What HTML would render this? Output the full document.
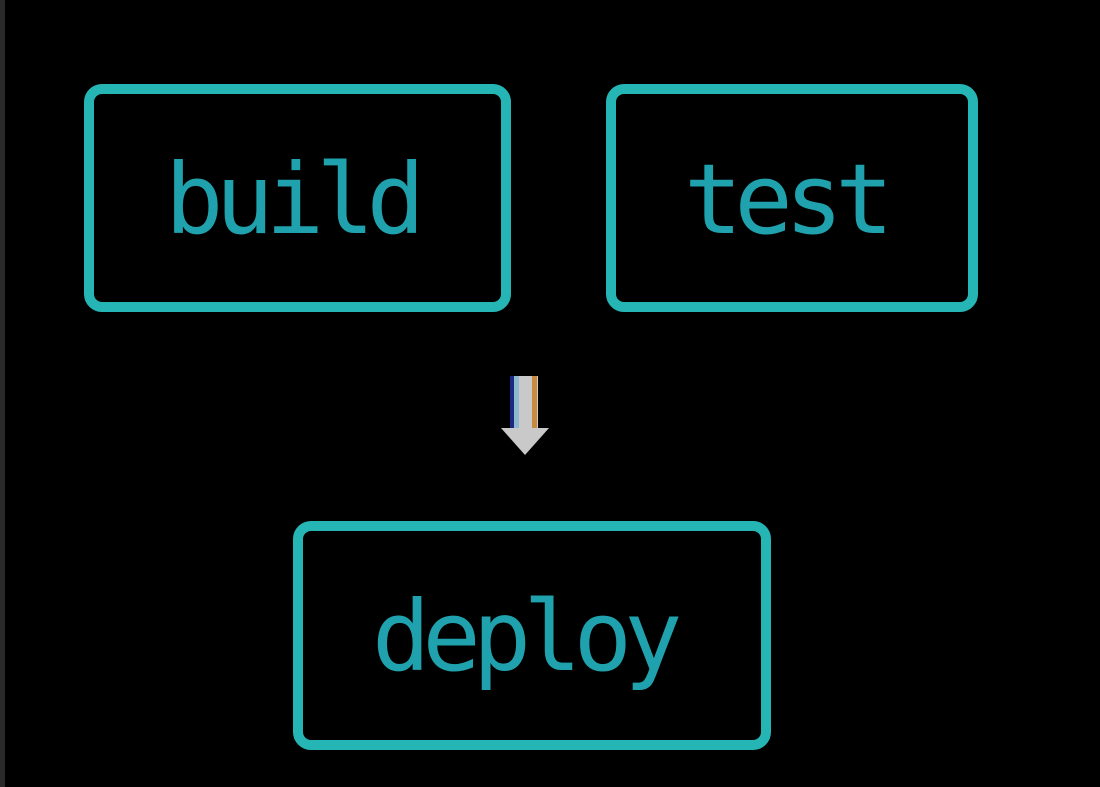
<!DOCTYPE html>
<html><head><style>
html,body{margin:0;padding:0;background:#000;width:1100px;height:787px;overflow:hidden;position:relative}
.strip{position:absolute;left:0;top:0;width:5px;height:787px;background:#2a2a2a}
.box{position:absolute;border:10px solid #26b5b5;border-radius:18px;box-sizing:border-box}
.t{position:absolute;font-family:"DejaVu Sans Mono","Liberation Mono",monospace;font-size:97px;letter-spacing:-8px;color:#1fa2ad;line-height:1;white-space:nowrap}
</style></head><body>
<div class="strip"></div>
<div class="box" style="left:84px;top:84px;width:427px;height:228px"></div>
<div class="box" style="left:606px;top:84px;width:372px;height:228px"></div>
<div class="box" style="left:293px;top:521px;width:478px;height:229px"></div>
<div class="t" style="left:165px;top:151px">build</div>
<div class="t" style="left:684px;top:151px">test</div>
<div class="t" style="left:372px;top:588px">deploy</div>
<svg style="position:absolute;left:495px;top:370px" width="60" height="90">
<rect x="15" y="6" width="28" height="60" fill="#c9c9c9"/>
<rect x="15" y="6" width="4" height="60" fill="#1a2a80"/>
<rect x="19" y="6" width="5" height="60" fill="#8fb8d0"/>
<rect x="37" y="6" width="5" height="60" fill="#c98a40"/>
<polygon points="6,58 54,58 30,85" fill="#c9c9c9"/>
</svg>
</body></html>
